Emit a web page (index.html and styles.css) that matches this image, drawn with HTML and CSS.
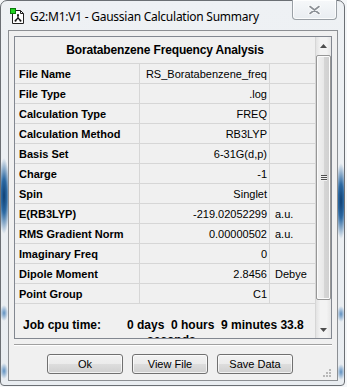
FILE: index.html
```html
<!DOCTYPE html>
<html>
<head>
<meta charset="utf-8">
<link rel="stylesheet" href="styles.css">
</head>
<body>
<div class="window">
  <div class="titlebar">
    <svg class="app-icon" width="15" height="16" viewBox="0 0 15 16">
      <path d="M2.5 2.5 H10.5 L13.5 5.5 V15.5 H2.5 Z" fill="#fff" stroke="#222" stroke-width="1"/>
      <path d="M10.5 2.5 V5.5 H13.5" fill="none" stroke="#222" stroke-width="1"/>
      <rect x="0.5" y="0.5" width="5" height="5" fill="#1fd21f" stroke="#0a7a0a" stroke-width="1"/>
      <path d="M8 7 V10 M8 10 L5.5 12.5 M8 10 L10.5 12.5" stroke="#111" stroke-width="1.3" fill="none"/>
      <circle cx="8" cy="7" r="1" fill="#111"/>
      <circle cx="5.5" cy="12.8" r="1" fill="#111"/>
      <circle cx="10.5" cy="12.8" r="1" fill="#111"/>
    </svg>
    <span class="title">G2:M1:V1 - Gaussian Calculation Summary</span>
    <div class="close">
      <svg width="13" height="10" viewBox="0 0 13 10">
        <path d="M2 1.5 L11 8.5 M11 1.5 L2 8.5" stroke="#ffffff" stroke-width="3.4" stroke-linecap="round"/>
        <path d="M2 1.5 L11 8.5 M11 1.5 L2 8.5" stroke="#8b9096" stroke-width="1.6" stroke-linecap="round"/>
      </svg>
    </div>
  </div>
  <div class="client">
    <div class="panel">
      <div class="table">
        <div class="hdr">Boratabenzene Frequency Analysis</div>
        <div class="row"><div class="lbl">File Name</div><div class="val">RS_Boratabenzene_freq</div><div class="unit"></div></div>
        <div class="row"><div class="lbl">File Type</div><div class="val">.log</div><div class="unit"></div></div>
        <div class="row"><div class="lbl">Calculation Type</div><div class="val">FREQ</div><div class="unit"></div></div>
        <div class="row"><div class="lbl">Calculation Method</div><div class="val">RB3LYP</div><div class="unit"></div></div>
        <div class="row"><div class="lbl">Basis Set</div><div class="val">6-31G(d,p)</div><div class="unit"></div></div>
        <div class="row"><div class="lbl">Charge</div><div class="val">-1</div><div class="unit"></div></div>
        <div class="row"><div class="lbl">Spin</div><div class="val">Singlet</div><div class="unit"></div></div>
        <div class="row"><div class="lbl">E(RB3LYP)</div><div class="val">-219.02052299</div><div class="unit">a.u.</div></div>
        <div class="row"><div class="lbl">RMS Gradient Norm</div><div class="val">0.00000502</div><div class="unit">a.u.</div></div>
        <div class="row"><div class="lbl">Imaginary Freq</div><div class="val">0</div><div class="unit"></div></div>
        <div class="row"><div class="lbl">Dipole Moment</div><div class="val">2.8456</div><div class="unit">Debye</div></div>
        <div class="row"><div class="lbl">Point Group</div><div class="val">C1</div><div class="unit"></div></div>
        <div class="cpu">
          <div class="cpu-lbl">Job cpu time:</div>
          <div class="cpu-val">0 days&nbsp; 0 hours&nbsp; 9 minutes 33.8<br><span class="cpu-sec">seconds</span></div>
        </div>
      </div>
      <div class="scrollbar">
        <div class="sb-btn"><svg width="7" height="4" viewBox="0 0 7 4"><path d="M0 4 L3.5 0 L7 4 Z" fill="#4d4d4d"/></svg></div>
        <div class="sb-track">
          <div class="thumb"><div class="thumb-grip"></div></div>
        </div>
        <div class="sb-btn"><svg width="7" height="4" viewBox="0 0 7 4"><path d="M0 0 L3.5 4 L7 0 Z" fill="#4d4d4d"/></svg></div>
      </div>
    </div>
    <div class="sep"></div>
    <div class="buttons">
      <div class="btn">Ok</div>
      <div class="btn">View File</div>
      <div class="btn">Save Data</div>
      <div class="grip"></div>
    </div>
  </div>
</div>
</body>
</html>
```
FILE: styles.css
```css
html, body {
  margin: 0;
  padding: 0;
  background: #f4f6f8;
}
.window {
  width: 345px;
  height: 386px;
  box-sizing: border-box;
  border: 1px solid #6b6f74;
  border-radius: 7px 7px 4px 4px;
  padding: 0 6px 4px 7px;
  background:
    radial-gradient(ellipse 6px 38px at 3px 195px, #0e3f72 0%, #2d6aa3 45%, rgba(120,160,200,0) 100%),
    radial-gradient(ellipse 6px 38px at 340px 200px, #0e3f72 0%, #2d6aa3 45%, rgba(120,160,200,0) 100%),
    radial-gradient(ellipse 4px 8px at 3px 312px, #5d8fc0 0%, rgba(120,160,200,0) 100%),
    radial-gradient(ellipse 4px 8px at 3px 370px, #5d8fc0 0%, rgba(120,160,200,0) 100%),
    radial-gradient(ellipse 4px 8px at 340px 313px, #5d8fc0 0%, rgba(120,160,200,0) 100%),
    radial-gradient(ellipse 4px 8px at 340px 371px, #5d8fc0 0%, rgba(120,160,200,0) 100%),
    linear-gradient(#eef1f4, #e9edf1);
  display: flex;
  flex-direction: column;
  font-family: "Liberation Sans", Arial, sans-serif;
}
.titlebar {
  height: 29px;
  display: flex;
  align-items: center;
  position: relative;
}
.app-icon {
  margin-left: 2px;
  margin-top: 1px;
  flex: none;
}
.title {
  margin-left: 5px;
  margin-top: 1px;
  font-family: "Noto Sans", "Open Sans", sans-serif;
  font-size: 12px;
  letter-spacing: -0.25px;
  color: #000;
}
.close {
  margin-left: auto;
  align-self: flex-start;
  margin-right: 1px;
  margin-top: -1px;
  width: 43px;
  height: 19px;
  border: 1px solid #9aa0a6;
  border-top: none;
  border-radius: 0 0 4px 4px;
  background: linear-gradient(#f6f8fa, #e9edf1);
  display: flex;
  align-items: center;
  justify-content: center;
  box-shadow: inset 0 0 0 1px rgba(255,255,255,0.8);
}
.client {
  width: 330px;
  height: 351px;
  box-sizing: border-box;
  border: 1px solid #8c8f93;
  background: #f0f0f0;
  padding: 5px 5px 0 5px;
  display: flex;
  flex-direction: column;
}
.panel {
  height: 303px;
  box-sizing: border-box;
  border: 1px solid #828790;
  display: flex;
  overflow: hidden;
}
.table {
  width: 301px;
  flex: none;
  box-sizing: border-box;
  border-right: 1px solid #d6d6d6;
  overflow: hidden;
}
.hdr {
  height: 26px;
  border-bottom: 1px solid #d6d6d6;
  display: flex;
  align-items: center;
  justify-content: center;
  font-weight: bold;
  font-size: 12px;
  letter-spacing: -0.15px;
  color: #000;
}
.row {
  display: flex;
  height: 19px;
  border-bottom: 1px solid #d6d6d6;
  font-size: 11px;
  color: #000;
}
.row > div {
  display: flex;
  align-items: center;
  box-sizing: border-box;
  white-space: nowrap;
}
.lbl {
  width: 125px;
  border-right: 1px solid #d6d6d6;
  padding-left: 4px;
  font-weight: bold;
}
.val {
  width: 130px;
  border-right: 1px solid #d6d6d6;
  justify-content: flex-end;
  padding-right: 2px;
}
.unit {
  width: 45px;
  padding-left: 5px;
}
.cpu {
  display: flex;
  padding-top: 14px;
  font-size: 12px;
  font-weight: bold;
  line-height: 15px;
  color: #000;
}
.cpu-lbl {
  width: 112px;
  padding-left: 8px;
  flex: none;
  box-sizing: border-box;
}
.cpu-val {
  white-space: nowrap;
}
.cpu-sec {
  padding-left: 20px;
}
.scrollbar {
  width: 15px;
  flex: none;
  display: flex;
  flex-direction: column;
  background: linear-gradient(90deg, #e3e3e3, #f3f3f3 30%, #f3f3f3 70%, #e6e6e6);
}
.sb-btn {
  height: 17px;
  display: flex;
  align-items: center;
  justify-content: center;
  flex: none;
}
.sb-track {
  flex: 1;
  padding: 1px 0;
  display: flex;
  flex-direction: column;
}
.thumb {
  height: 245px;
  box-sizing: border-box;
  border: 1px solid #979797;
  border-radius: 2px;
  background: linear-gradient(90deg, #f1f1f1, #e8e8e8 50%, #d6d6d6 51%, #cfcfcf);
  display: flex;
  align-items: center;
  justify-content: center;
  box-shadow: inset 0 0 0 1px #fbfbfb;
}
.thumb-grip {
  width: 6px;
  height: 6px;
  background: repeating-linear-gradient(#4f4f4f 0 1px, #f0f0f0 1px 2px);
}
.sep {
  margin-top: 5px;
  height: 1px;
  background: #a0a0a0;
  border-bottom: 1px solid #ffffff;
}
.buttons {
  display: flex;
  padding-left: 33px;
  padding-top: 8px;
  gap: 9px;
  position: relative;
  flex: 1;
}
.btn {
  width: 76px;
  height: 20px;
  box-sizing: border-box;
  border: 1px solid #707070;
  border-radius: 3px;
  background: linear-gradient(#f2f2f2 0%, #ebebeb 50%, #dddddd 51%, #cfcfcf 100%);
  box-shadow: inset 0 0 0 1px rgba(255,255,255,0.7);
  display: flex;
  align-items: center;
  justify-content: center;
  font-size: 11px;
  color: #000;
}
.grip {
  position: absolute;
  right: 0;
  bottom: 2px;
  width: 9px;
  height: 9px;
  background:
    radial-gradient(circle at 7px 1px, #b8b8b8 0.8px, transparent 1.2px),
    radial-gradient(circle at 4px 4px, #b8b8b8 0.8px, transparent 1.2px),
    radial-gradient(circle at 7px 4px, #b8b8b8 0.8px, transparent 1.2px),
    radial-gradient(circle at 1px 7px, #b8b8b8 0.8px, transparent 1.2px),
    radial-gradient(circle at 4px 7px, #b8b8b8 0.8px, transparent 1.2px),
    radial-gradient(circle at 7px 7px, #b8b8b8 0.8px, transparent 1.2px);
}
```
